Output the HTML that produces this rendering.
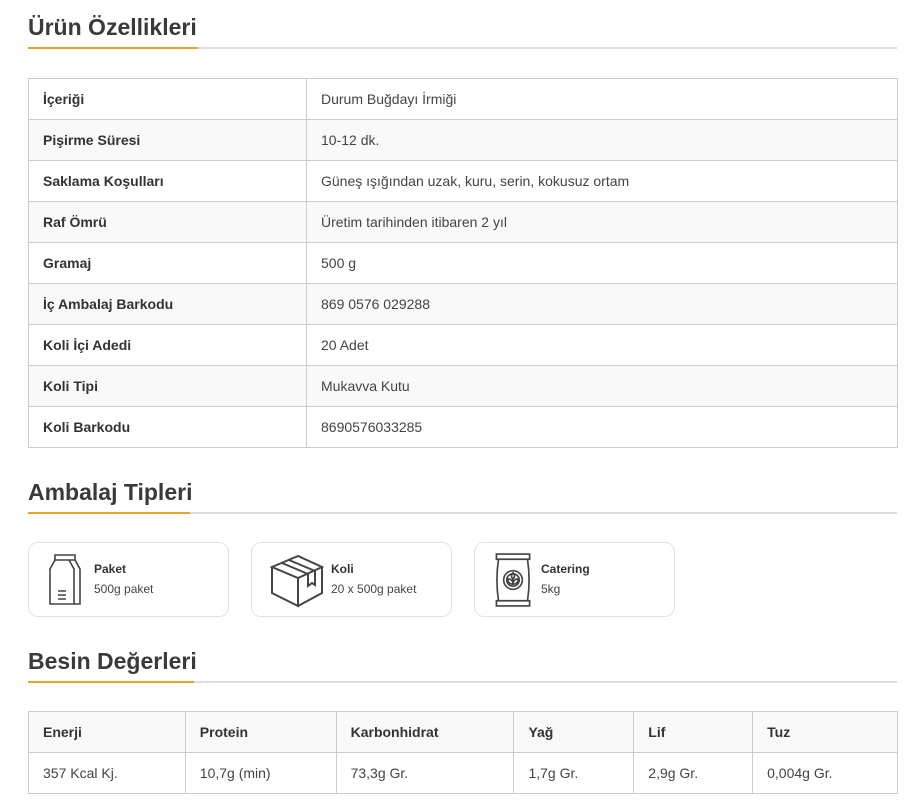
<!DOCTYPE html>
<html><head><meta charset="utf-8"><style>
*{box-sizing:border-box;margin:0;padding:0}
body{width:914px;height:812px;background:#fff;font-family:"Liberation Sans",Arial,sans-serif;color:#444;position:relative;overflow:hidden}
h2{position:absolute;left:28px;font-size:23px;font-weight:bold;color:#3a3a3a;letter-spacing:0}
.line{position:absolute;left:28px;width:869px;height:2px;background:#ddd}
.line i{position:absolute;left:0;top:0;height:2px;background:#e5a42a}
table{position:absolute;left:28px;width:870px;border-collapse:collapse;font-size:14px}
td{border:1px solid #ccc;height:41px;padding:0 14px;color:#444}
td.l{font-weight:bold;color:#333;width:278px}
tr.s td{background:#f9f9f9}
.card{position:absolute;top:542px;width:201px;height:75px;border:1px solid #e3e3e3;border-radius:10px}
.card svg{position:absolute}
.card b{position:absolute;top:19px;font-size:12px;color:#333}
.card span{position:absolute;top:39px;font-size:12px;color:#444}
</style></head><body>
<h2 style="top:14px">Ürün Özellikleri</h2>
<div class="line" style="top:47px"><i style="width:170px"></i></div>
<table style="top:78px">
<tr><td class="l">İçeriği</td><td>Durum Buğdayı İrmiği</td></tr>
<tr class="s"><td class="l">Pişirme Süresi</td><td>10-12 dk.</td></tr>
<tr><td class="l">Saklama Koşulları</td><td>Güneş ışığından uzak, kuru, serin, kokusuz ortam</td></tr>
<tr class="s"><td class="l">Raf Ömrü</td><td>Üretim tarihinden itibaren 2 yıl</td></tr>
<tr><td class="l">Gramaj</td><td>500 g</td></tr>
<tr class="s"><td class="l">İç Ambalaj Barkodu</td><td>869 0576 029288</td></tr>
<tr><td class="l">Koli İçi Adedi</td><td>20 Adet</td></tr>
<tr class="s"><td class="l">Koli Tipi</td><td>Mukavva Kutu</td></tr>
<tr><td class="l">Koli Barkodu</td><td>8690576033285</td></tr>
</table>
<h2 style="top:479px">Ambalaj Tipleri</h2>
<div class="line" style="top:512px"><i style="width:162px"></i></div>
<div class="card" style="left:28px">
<svg style="left:18px;top:10px" width="38" height="54" viewBox="0 0 38 54" fill="none" stroke="#444" stroke-width="1.6"><path d="M8 2h20v5H8z"/><path d="M8 7L3 16v35h24V16L22 7"/><path d="M28 7l5 9v35h-6"/><path d="M11 38h8M11 42h8M11 46h8"/></svg>
<b style="left:65px">Paket</b><span style="left:65px">500g paket</span></div>
<div class="card" style="left:251px">
<svg style="left:17px;top:9px" width="56" height="56" viewBox="0 0 56 56" fill="none" stroke="#444" stroke-width="2"><path d="M3 15L29 4l24 11-24 11z"/><path d="M3 15v26l26 13V26"/><path d="M53 15v26L29 54"/><path d="M13 11l26 11M20 8l26 11"/><path d="M39 22v12l4-3 3 2V19"/></svg>
<b style="left:79px">Koli</b><span style="left:79px">20 x 500g paket</span></div>
<div class="card" style="left:474px">
<svg style="left:18px;top:9px" width="40" height="56" viewBox="0 0 38 54" fill="none" stroke="#444" stroke-width="1.6"><path d="M3 2h32v5H3zM3 47h32v5H3z"/><path d="M5 7q-3 20 0 40M33 7q3 20 0 40"/><circle cx="19" cy="27" r="9"/><circle cx="19" cy="27" r="6"/><path d="M19 32v-6M19 31q-5 0-5-5q5 0 5 5q5 0 5-5q-5 0-5 5M19 26q-3-3 0-6q3 3 0 6"/></svg>
<b style="left:66px">Catering</b><span style="left:66px">5kg</span></div>
<h2 style="top:648px">Besin Değerleri</h2>
<div class="line" style="top:681px"><i style="width:166px"></i></div>
<table style="top:711px">
<tr class="s"><td class="l" style="width:157px">Enerji</td><td class="l" style="width:151px">Protein</td><td class="l" style="width:178px">Karbonhidrat</td><td class="l" style="width:120px">Yağ</td><td class="l" style="width:119px">Lif</td><td class="l" style="width:145px">Tuz</td></tr>
<tr><td>357 Kcal Kj.</td><td>10,7g (min)</td><td>73,3g Gr.</td><td>1,7g Gr.</td><td>2,9g Gr.</td><td>0,004g Gr.</td></tr>
</table>
</body></html>
